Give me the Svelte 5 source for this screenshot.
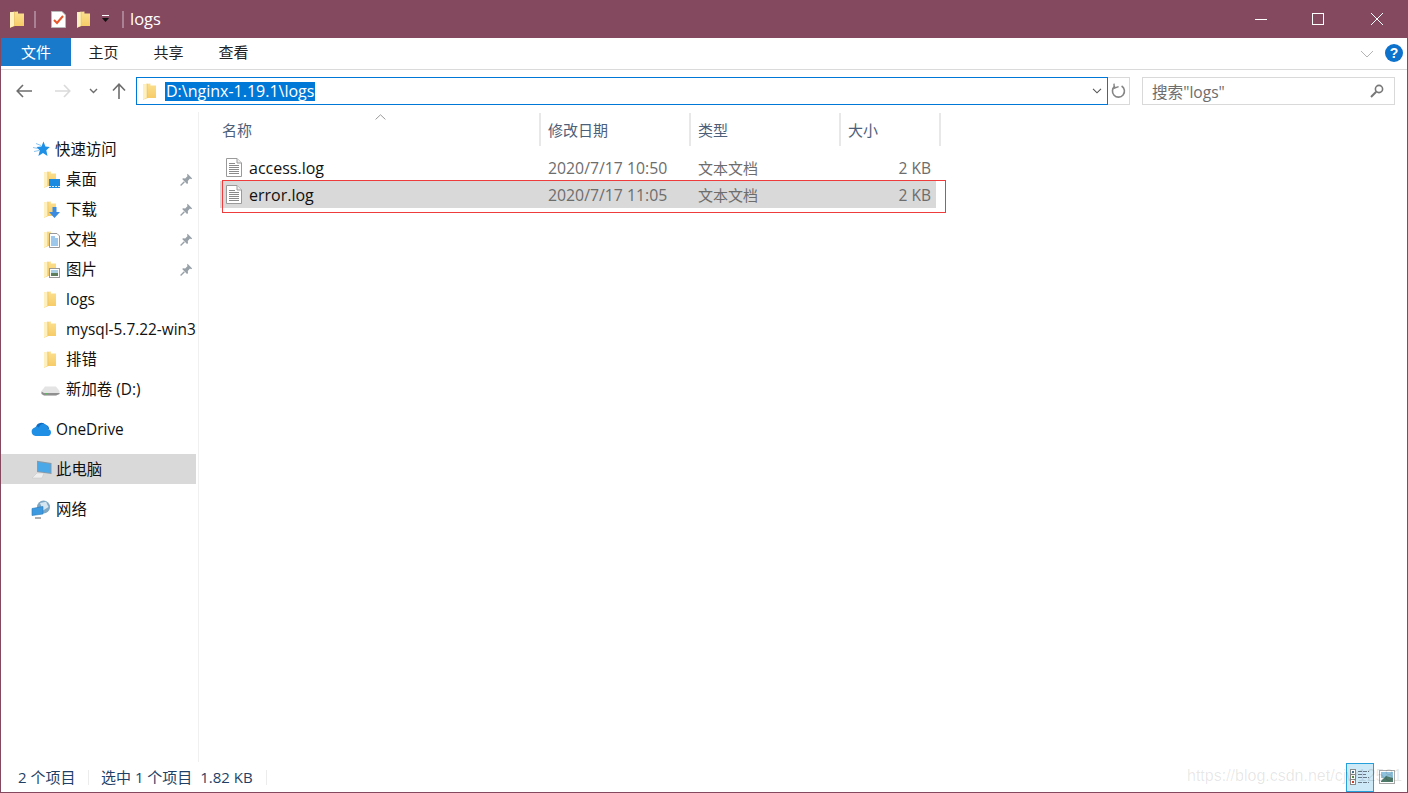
<script>
  const quick = [
    { label: '桌面', badge: 'desktop', pin: true, cjk: true },
    { label: '下载', badge: 'down', pin: true, cjk: true },
    { label: '文档', badge: 'doc', pin: true, cjk: true },
    { label: '图片', badge: 'pic', pin: true, cjk: true },
    { label: 'logs' },
    { label: 'mysql-5.7.22-win32' },
    { label: '排错', cjk: true },
  ];

  const files = [
    { name: 'access.log', date: '2020/7/17 10:50', type: '文本文档', size: '2 KB' },
    { name: 'error.log', date: '2020/7/17 11:05', type: '文本文档', size: '2 KB', selected: true },
  ];
</script>

{#snippet folder(w = 14, h = 17)}
  <svg class="ico" width={w} height={h} viewBox="0 0 14 17" preserveAspectRatio="none">
    <defs>
      <linearGradient id="fold" x1="0" y1="0" x2="0" y2="1">
        <stop offset="0" stop-color="#fbe08f" />
        <stop offset="1" stop-color="#f6c964" />
      </linearGradient>
    </defs>
    <path d="M0 1.2 L8 .4 L8 2.4 L14 2.4 L14 15 L5 15 L0 16.8 Z" fill="url(#fold)" />
    <path d="M0 1.2 L4.5 .7 L4.5 14.6 L0 16.8 Z" fill="#fff0c0" />
    <path d="M4.5 .7 L4.5 14.8" stroke="#e6bb5c" stroke-width=".7" />
  </svg>
{/snippet}

{#snippet pin()}
  <svg class="pin" width="13" height="13" viewBox="0 0 13 13">
    <path d="M7.6 .8 L12.2 5.4 L11 6.2 L10 5.6 L7.8 8 L8 10.2 L7 11 L2.2 6 L3 5.2 L5.2 5.4 L7.6 3 L7 2 Z" fill="#98a0a8" />
    <path d="M4.4 8.8 L.6 12.4" stroke="#98a0a8" stroke-width="1.4" />
  </svg>
{/snippet}

{#snippet textfile()}
  <svg class="ico" width="16" height="19" viewBox="0 0 16 19">
    <path d="M.5 .5 H11 L15.5 5 V18.5 H.5 Z" fill="#fff" stroke="#9a9a9a" />
    <path d="M11 .5 V5 H15.5" fill="#eee" stroke="#9a9a9a" />
    <path d="M3 5.5 H9 M3 7.5 H13 M3 9.5 H13 M3 11.5 H13 M3 13.5 H13 M3 15.5 H13" stroke="#8a8a8a" />
  </svg>
{/snippet}

<div class="window">
  <header class="titlebar">
    <div class="qat">
      {@render folder(14, 17)}
      <span class="qat-sep"></span>
      <svg class="qat-check" width="15" height="17" viewBox="0 0 15 17">
        <path d="M.5 .5 H11 L14.5 4 V16.5 H.5 Z" fill="#fff" stroke="#b8b8b8" />
        <path d="M3 9 L6 12 L12 5" fill="none" stroke="#e8562a" stroke-width="2" />
      </svg>
      {@render folder(13, 17)}
      <svg class="qat-drop" width="9" height="8" viewBox="0 0 9 8">
        <path d="M1 .5 H8" stroke="#fff" />
        <path d="M1 3 H8 L4.5 7 Z" fill="#111" />
      </svg>
      <span class="qat-sep last"></span>
    </div>
    <span class="title">logs</span>
    <div class="winbtns">
      <button aria-label="最小化"><svg width="12" height="12" viewBox="0 0 12 12"><path d="M0 6.5 H12" stroke="#fff" /></svg></button>
      <button aria-label="最大化"><svg class="maxi" width="12" height="12" viewBox="0 0 12 12"><rect x=".5" y=".5" width="11" height="11" fill="none" stroke="#fff" /></svg></button>
      <button aria-label="关闭"><svg width="12" height="12" viewBox="0 0 12 12"><path d="M0 0 L12 12 M12 0 L0 12" stroke="#fff" /></svg></button>
    </div>
  </header>

  <nav class="ribbon">
    <span class="tab file">文件</span>
    <span class="tab">主页</span>
    <span class="tab">共享</span>
    <span class="tab">查看</span>
    <span class="spacer"></span>
    <svg class="collapse" width="14" height="8" viewBox="0 0 14 8"><path d="M1 1 L7 7 L13 1" fill="none" stroke="#b4b4b4" /></svg>
    <span class="help">?</span>
  </nav>

  <div class="addressbar">
    <div class="navbtns">
      <svg width="16" height="14" viewBox="0 0 16 14"><path d="M7 1 L1.2 7 L7 13 M1.5 7 H16" fill="none" stroke="#6d6d6d" stroke-width="1.6" /></svg>
      <svg class="fwd" width="16" height="14" viewBox="0 0 16 14"><path d="M9 1 L14.8 7 L9 13 M14.5 7 H0" fill="none" stroke="#dadada" stroke-width="1.6" /></svg>
      <svg class="recent" width="9" height="6" viewBox="0 0 9 6"><path d="M1 1 L4.5 4.5 L8 1" fill="none" stroke="#6d6d6d" stroke-width="1.4" /></svg>
      <svg class="up" width="14" height="16" viewBox="0 0 14 16"><path d="M1 7.5 L7 1.2 L13 7.5 M7 1.5 V16" fill="none" stroke="#6d6d6d" stroke-width="1.6" /></svg>
    </div>
    <div class="path">
      {@render folder(13, 17)}
      <span class="path-text">D:\nginx-1.19.1\logs</span>
      <svg class="path-drop" width="10" height="6" viewBox="0 0 10 6"><path d="M1 .8 L5 4.8 L9 .8" fill="none" stroke="#555" stroke-width="1.1" /></svg>
    </div>
    <div class="refresh">
      <svg width="15" height="16" viewBox="0 0 15 16"><path d="M10.6 3 A6 6 0 1 1 4 3.2" fill="none" stroke="#858585" stroke-width="1.6" /><path d="M3 .6 L3.2 5.2 L7.6 3.6" fill="none" stroke="#858585" stroke-width="1.4" /></svg>
    </div>
    <div class="search">
      <span>搜索"logs"</span>
      <svg width="14" height="14" viewBox="0 0 14 14"><circle cx="9" cy="5" r="3.6" fill="none" stroke="#777" stroke-width="1.6" /><path d="M6.2 7.8 L1 13" stroke="#777" stroke-width="2" /></svg>
    </div>
  </div>

  <div class="body">
    <aside class="sidebar">
      <div class="row top">
        <svg class="ico star" width="17" height="16" viewBox="0 0 17 16"><path d="M10.5 .5 L12.4 5.6 L16.8 6 L13.3 9.2 L14.5 15 L10 12 L5.4 15 L6.8 9.4 L3.5 6 L8.4 5.6 Z" fill="#1e90e6" /><path d="M3 2.5 L8 4.5 M0 6.5 L5 7.5 M1 10.5 L6 9.5" stroke="#8cc6f0" /></svg>
        <span class="cjk">快速访问</span>
      </div>
      {#each quick as item}
        <div class="row sub">
          <span class="fold-wrap">
            {@render folder(12, 17)}
            {#if item.badge === 'desktop'}
              <svg class="badge" width="11" height="9" viewBox="0 0 11 9"><rect width="11" height="9" fill="#1b8ae0" /><path d="M0 7.5 H11" stroke="#d6ecfb" stroke-dasharray="2 1" /></svg>
            {:else if item.badge === 'down'}
              <svg class="badge" width="11" height="11" viewBox="0 0 11 11"><path d="M3.5 0 H7.5 V5 H11 L5.5 11 L0 5 H3.5 Z" fill="#3b8be0" /></svg>
            {:else if item.badge === 'doc'}
              <svg class="badge" width="11" height="15" viewBox="0 0 11 15"><path d="M.5 .5 H8 L10.5 3 V14.5 H.5 Z" fill="#fff" stroke="#9a9a9a" /><path d="M2 4 H6 M2 6 H9 M2 8 H9 M2 10 H9 M2 12 H9" stroke="#3d8ed8" /></svg>
            {:else if item.badge === 'pic'}
              <svg class="badge" width="11" height="10" viewBox="0 0 11 10"><rect x=".5" y=".5" width="10" height="9" fill="#fff" stroke="#9a9a9a" /><rect x="2" y="2" width="7" height="3" fill="#a9cfe4" /><rect x="2" y="5" width="7" height="3" fill="#5f7f5c" /></svg>
            {/if}
          </span>
          <span class="label" class:cjk={item.cjk}>{item.label}</span>
          {#if item.pin}{@render pin()}{/if}
        </div>
      {/each}
      <div class="row sub drive">
        <svg class="ico" width="19" height="10" viewBox="0 0 19 10"><path d="M4 .5 H15 L18.5 5 V8 L15 9.5 H3 L.5 8 V5 Z" fill="#e4e4e4" /><path d="M.5 5.5 L3 7 H18.5 V8 L15 9.5 H3 L.5 8 Z" fill="#8f8f8f" /><rect x="5" y="7" width="2" height="1.4" fill="#58c05a" /></svg>
        <span class="label cjk">新加卷 (D:)</span>
      </div>
      <div class="row top gap">
        <svg class="ico" width="21" height="14" viewBox="0 0 21 14"><path d="M5 5 A5.4 5.4 0 0 1 14.6 3 A4 4 0 0 1 18 7 L9 10 Z" fill="#0f6cc0" /><path d="M4.6 14 A4.4 4.4 0 0 1 3.8 5.4 A3 3 0 0 1 8 5.8 A4.4 4.4 0 0 1 17 7 A3.6 3.6 0 0 1 17.4 14 Z" fill="#1f8fe6" /></svg>
        <span>OneDrive</span>
      </div>
      <div class="row top gap current">
        <svg class="ico" width="21" height="19" viewBox="0 0 21 19"><path d="M1 18 L6 13 H13 L11 18 Z" fill="#eee" stroke="#c4c4c4" stroke-width=".5" /><path d="M6 .8 L20.5 3 V14 L6 12 Z" fill="#8b9aa6" /><path d="M7 2 L19.6 3.9 V13 L7 11.2 Z" fill="#4aa8e8" /></svg>
        <span class="cjk">此电脑</span>
      </div>
      <div class="row top gap">
        <svg class="ico" width="20" height="19" viewBox="0 0 20 19"><circle cx="12.5" cy="7" r="6.5" fill="#7fa8c4" /><path d="M9 3 L15 1.8 L17.5 7 L12 10.5 Z" fill="#d5e6f1" /><path d="M1 8.5 L12 6.5 V14 L1 15.5 Z" fill="#3d9ae0" stroke="#2a78b6" stroke-width=".6" /><path d="M4 18 H10" stroke="#9a9a9a" stroke-width="1.6" /></svg>
        <span class="cjk net">网络</span>
      </div>
    </aside>

    <main class="content">
      <div class="cols head">
        <div class="col name">名称<svg class="sort" width="11" height="6" viewBox="0 0 11 6"><path d="M.6 5.4 L5.5 .8 L10.4 5.4" fill="none" stroke="#9a9a9a" /></svg></div>
        <div class="col date">修改日期</div>
        <div class="col type">类型</div>
        <div class="col size">大小</div>
      </div>
      <div class="list">
        {#each files as f}
          <div class="cols item" class:selected={f.selected}>
            <div class="col name">{@render textfile()}<span>{f.name}</span></div>
            <div class="col date">{f.date}</div>
            <div class="col type">{f.type}</div>
            <div class="col size">{f.size}</div>
          </div>
        {/each}
        <div class="redbox"></div>
      </div>
    </main>
  </div>

  <footer class="status">
    <span class="count">2 个项目</span>
    <span class="sel">选中 1 个项目&nbsp;&nbsp;1.82 KB</span>
    <span class="spacer"></span>
    <span class="view on">
      <svg width="20" height="16" viewBox="0 0 20 16"><rect x=".5" y=".5" width="5" height="5" fill="#fff" stroke="#888" /><rect x=".5" y="5.5" width="5" height="5" fill="#fff" stroke="#888" /><rect x=".5" y="10.5" width="5" height="5" fill="#fff" stroke="#888" /><rect x="2" y="2" width="2" height="2" fill="#4a6f8a" /><rect x="2" y="7" width="2" height="2" fill="#5a8a4a" /><rect x="2" y="12" width="2" height="2" fill="#c8402a" /><path d="M8 2.5 H19 M8 5.5 H16 M8 8.5 H19 M8 13.5 H19" stroke="#6a7a86" stroke-dasharray="4 1" /></svg>
    </span>
    <span class="view big">
      <svg width="16" height="14" viewBox="0 0 16 14"><rect x=".5" y=".5" width="15" height="13" fill="#fff" stroke="#a8a8a8" /><rect x="2" y="2" width="12" height="6" fill="#8fc2dc" /><path d="M2 11 L7 6 L14 8 V12 H2 Z" fill="#4f7a6a" /></svg>
    </span>
    <span class="watermark">https://blog.csdn.net/cjw12581</span>
  </footer>
</div>

<style>
  :global(body) {
    margin: 0;
    overflow: hidden;
    font-family: "Open Sans", "Noto Sans CJK SC", sans-serif;
  }
  svg { display: block; flex: none; }

  .window {
    box-sizing: border-box;
    height: 793px;
    display: flex;
    flex-direction: column;
    background: #fff;
    border-left: 1px solid #84495f;
    border-right: 1px solid #84495f;
    border-bottom: 1px solid #84495f;
    font-size: 15.4px;
    color: #111;
  }

  /* title bar */
  .titlebar {
    height: 38px;
    flex: none;
    margin: 0 -1px;
    background: #84495f;
    display: flex;
    align-items: center;
    padding-left: 10px;
    color: #fff;
  }
  .qat { display: flex; align-items: center; }
  .qat-sep { width: 2px; height: 17px; background: #a98393; margin: 0 15px 0 10px; }
  .qat-sep.last { margin: 0 6px 0 12px; }
  .qat-check { margin-right: 11px; }
  .qat-drop { margin-left: 11px; }
  .title { font-size: 16.5px; margin-bottom: 2px; }
  .winbtns { margin-left: auto; display: flex; padding-right: 2px; }
  .winbtns button {
    width: 58px;
    height: 38px;
    padding: 0;
    border: 0;
    background: none;
    display: flex;
    align-items: center;
    justify-content: center;
  }
  .maxi { margin-right: 2px; }

  /* ribbon tabs */
  .ribbon {
    height: 32px;
    flex: none;
    box-sizing: border-box;
    display: flex;
    align-items: flex-start;
    border-bottom: 1px solid #dadada;
    padding-right: 4px;
  }
  .tab { width: 65px; height: 28px; line-height: 29px; text-align: center; color: #222; font-size: 15px; }
  .tab.file { width: 70px; background: #1979ca; color: #fff; }
  .ribbon .spacer { flex: 1; }
  .collapse { margin: 12px 11px 0 0; }
  .help {
    width: 18px;
    height: 18px;
    margin-top: 6px;
    border-radius: 50%;
    background: #0c72cc;
    color: #fff;
    font: bold 14px/18px "Liberation Sans", sans-serif;
    text-align: center;
  }

  /* address row */
  .addressbar {
    height: 42px;
    flex: none;
    display: flex;
    align-items: center;
    box-sizing: border-box;
  }
  .navbtns { width: 135px; display: flex; align-items: center; padding-left: 15px; box-sizing: border-box; }
  .navbtns .fwd { margin-left: 23px; }
  .navbtns .recent { margin-left: 18px; }
  .navbtns .up { margin-left: 14px; }
  .path {
    box-sizing: border-box;
    width: 972px;
    height: 28px;
    border: 1px solid #0078d7;
    display: flex;
    align-items: center;
    padding-left: 6px;
  }
  .path-text {
    margin-left: 9px;
    background: #0078d7;
    color: #fff;
    font-size: 16px;
    line-height: 19px;
    padding: 0 1px;
  }
  .path-drop { margin-left: auto; margin-right: 5px; }
  .refresh {
    box-sizing: border-box;
    width: 22px;
    height: 28px;
    border: 1px solid #d9d9d9;
    border-left: 0;
    display: flex;
    align-items: center;
    justify-content: center;
  }
  .search {
    box-sizing: border-box;
    width: 253px;
    height: 28px;
    margin-left: 12px;
    border: 1px solid #d9d9d9;
    display: flex;
    align-items: center;
    justify-content: space-between;
    padding: 0 10px 0 9px;
    color: #6d6d6d;
    font-size: 15.6px;
  }

  /* body */
  .body { flex: 1; display: flex; min-height: 0; }
  .sidebar {
    box-sizing: border-box;
    width: 198px;
    padding-top: 22px;
    flex: none;
    border-right: 1px solid #f0f0f0;
    overflow: hidden;
  }
  .row {
    height: 30px;
    width: 195px;
    box-sizing: border-box;
    display: flex;
    align-items: center;
    white-space: nowrap;
    overflow: hidden;
    position: relative;
  }
  .row.top { padding-left: 30px; }
  .row.top .ico { margin-right: 4px; }
  .row.top .star { margin: 0 5px 0 2px; }
  .row.gap { margin-top: 10px; }
  .row.current { background: #d9d9d9; }
  .row.sub { padding-left: 43px; }
  .cjk { margin-bottom: 2px; }
  .net { margin-left: 1px; }
  .fold-wrap { position: relative; width: 22px; height: 17px; flex: none; }
  .badge { position: absolute; left: 5px; bottom: 0; }
  .label { flex: none; }
  .pin { position: absolute; right: 3px; top: 9px; }
  .row.drive .ico { margin: 3px 6px 0 -3px; }

  .content { flex: 1; min-width: 0; }
  .cols { display: flex; margin-left: 21px; width: 721px; }
  .col { box-sizing: border-box; white-space: nowrap; }
  .col.name { width: 321px; padding-left: 2px; display: flex; align-items: center; position: relative; }
  .col.date { width: 150px; padding-left: 7px; }
  .col.type { width: 150px; padding-left: 7px; }
  .col.size { width: 100px; padding-left: 7px; }

  .head {
    height: 36px;
    align-items: stretch;
    color: #4c607a;
    font-size: 15px;
  }
  .head .col { border-right: 2px solid #e8e8e8; height: 33px; margin-top: 1px; line-height: 35px; }
  .head .col.name { padding-top: 2px; }
  .sort { position: absolute; left: 155px; top: 1px; }

  .list { position: relative; padding-top: 6px; }
  .item { width: 716px; height: 27px; align-items: center; color: #6d6d6d; }
  .item .col.name { color: #111; font-size: 16px; padding-left: 6px; }
  .item .col.name .ico { margin-right: 7px; }
  .item .col.date { font-size: 15.8px; }
  .item .col.type { font-size: 15px; }
  .item .col.size { width: 95px; font-size: 15.5px; text-align: right; padding-right: 5px; }
  .item.selected { background: #d9d9d9; }
  .redbox {
    position: absolute;
    left: 23px;
    top: 32px;
    width: 724px;
    height: 33px;
    box-sizing: border-box;
    border: 1px solid #ee3b3b;
  }

  /* status bar */
  .status {
    position: relative;
    height: 30px;
    flex: none;
    display: flex;
    align-items: center;
    padding: 0 5px 0 17px;
    color: #1f3f66;
    font-size: 15px;
  }
  .count { width: 70px; height: 15px; line-height: 15px; border-right: 1px solid #ececec; }
  .sel { width: 178px; height: 15px; line-height: 15px; padding-left: 12px; box-sizing: border-box; border-right: 1px solid #ececec; }
  .status .spacer { flex: 1; }
  .view {
    box-sizing: border-box;
    width: 28px;
    height: 29px;
    display: flex;
    align-items: center;
    justify-content: center;
  }
  .view.on { background: #cde8f7; border: 1px solid #26a0da; }
  .view.big svg { margin-right: 2px; }
  /* image-host watermark burnt over the corner of the window */
  .watermark {
    position: absolute;
    left: 1186px;
    top: 5px;
    font: 16px "Liberation Sans", sans-serif;
    color: rgba(0, 0, 0, 0.1);
    white-space: nowrap;
    pointer-events: none;
  }
</style>
